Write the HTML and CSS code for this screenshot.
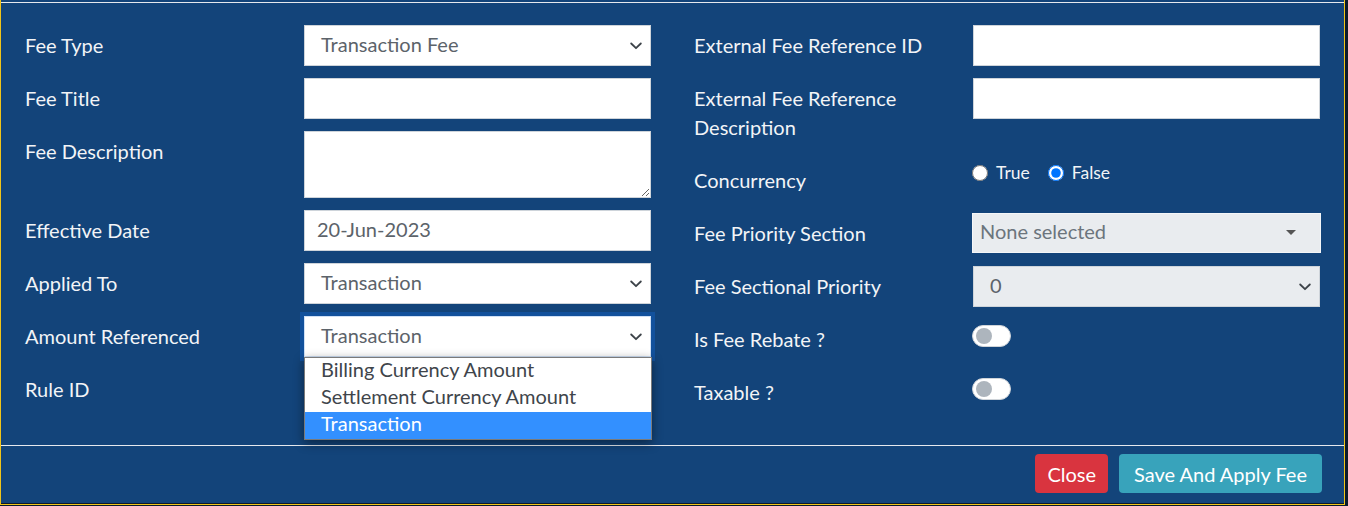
FILE: index.html
```html
<!DOCTYPE html>
<html lang="en">
<head>
<meta charset="utf-8">
<title>Fee</title>
<link rel="stylesheet" href="styles.css">
</head>
<body>
<div class="frame">
  <div class="modal">
    <div class="modal-top"></div>
    <div class="modal-body">
      <div class="col">
        <div class="group">
          <div class="label">Fee Type</div>
          <div class="control">
            <div class="field select"><span>Transaction Fee</span>
              <svg class="chev" viewBox="0 0 12 8" width="12" height="8"><polyline points="1.2,1.5 6,6.2 10.8,1.5" fill="none" stroke="#3d4349" stroke-width="1.8" stroke-linecap="round" stroke-linejoin="round"/></svg>
            </div>
          </div>
        </div>
        <div class="group">
          <div class="label">Fee Title</div>
          <div class="control"><input class="field" type="text" value=""></div>
        </div>
        <div class="group">
          <div class="label">Fee Description</div>
          <div class="control"><textarea class="field area"></textarea></div>
        </div>
        <div class="group">
          <div class="label">Effective Date</div>
          <div class="control"><input class="field" type="text" value="20-Jun-2023"></div>
        </div>
        <div class="group">
          <div class="label">Applied To</div>
          <div class="control">
            <div class="field select"><span>Transaction</span>
              <svg class="chev" viewBox="0 0 12 8" width="12" height="8"><polyline points="1.2,1.5 6,6.2 10.8,1.5" fill="none" stroke="#3d4349" stroke-width="1.8" stroke-linecap="round" stroke-linejoin="round"/></svg>
            </div>
          </div>
        </div>
        <div class="group">
          <div class="label">Amount Referenced</div>
          <div class="control anchor">
            <div class="field select focus"><span>Transaction</span>
              <svg class="chev" viewBox="0 0 12 8" width="12" height="8"><polyline points="1.2,1.5 6,6.2 10.8,1.5" fill="none" stroke="#3d4349" stroke-width="1.8" stroke-linecap="round" stroke-linejoin="round"/></svg>
            </div>
            <ul class="options">
              <li>Billing Currency Amount</li>
              <li>Settlement Currency Amount</li>
              <li class="sel">Transaction</li>
            </ul>
          </div>
        </div>
        <div class="group">
          <div class="label">Rule ID</div>
          <div class="control">
            <div class="field select"><span></span></div>
          </div>
        </div>
      </div>

      <div class="col">
        <div class="group">
          <div class="label">External Fee Reference ID</div>
          <div class="control"><input class="field" type="text" value=""></div>
        </div>
        <div class="group">
          <div class="label">External Fee Reference Description</div>
          <div class="control"><input class="field" type="text" value=""></div>
        </div>
        <div class="group">
          <div class="label">Concurrency</div>
          <div class="control radios">
            <label class="radio"><input type="radio" name="conc"> True</label>
            <label class="radio"><input type="radio" name="conc" checked> False</label>
          </div>
        </div>
        <div class="group">
          <div class="label">Fee Priority Section</div>
          <div class="control">
            <div class="multi"><span>None selected</span><span class="caret"></span></div>
          </div>
        </div>
        <div class="group">
          <div class="label">Fee Sectional Priority</div>
          <div class="control">
            <div class="field select grey"><span>0</span>
              <svg class="chev" viewBox="0 0 12 8" width="12" height="8"><polyline points="1.2,1.5 6,6.2 10.8,1.5" fill="none" stroke="#3d4349" stroke-width="1.8" stroke-linecap="round" stroke-linejoin="round"/></svg>
            </div>
          </div>
        </div>
        <div class="group">
          <div class="label">Is Fee Rebate ?</div>
          <div class="control"><span class="switch"><span class="knob"></span></span></div>
        </div>
        <div class="group">
          <div class="label">Taxable ?</div>
          <div class="control"><span class="switch"><span class="knob"></span></span></div>
        </div>
      </div>
    </div>
    <div class="modal-footer">
      <button class="btn btn-close">Close</button>
      <button class="btn btn-save">Save And Apply Fee</button>
    </div>
  </div>
</div>
</body>
</html>
```

FILE: styles.css
```css
html, body {
  margin: 0;
  padding: 0;
}
body {
  background: #0b1a2c;
  font-family: Lato, "Noto Sans", sans-serif;
  width: 1348px;
  height: 506px;
  overflow: hidden;
}
.frame {
  width: 1343px;
  border-left: 1px solid #f0c419;
  border-right: 1px solid #f0c419;
  border-bottom: 1px solid #f0c419;
  padding-bottom: 1px;
}
.modal {
  background: #13447a;
  height: 503px;
  display: flex;
  flex-direction: column;
}
.modal-top {
  height: 2px;
  border-bottom: 1px solid #e6e9ee;
}
.modal-body {
  height: 443px;
  box-sizing: border-box;
  padding: 22px 23px 0 24px;
  display: flex;
  gap: 43px;
  border-bottom: 1px solid #e6e9ee;
}
.col {
  width: 626px;
  flex: none;
}
.group {
  display: flex;
  margin-bottom: 12px;
}
.label {
  width: 279px;
  flex: none;
  box-sizing: border-box;
  padding: 6px 15px 6px 0;
  line-height: 29px;
  font-size: 20px;
  color: #f2f4f7;
}
.control {
  width: 347px;
  flex: none;
}
.anchor {
  position: relative;
}
.field {
  display: block;
  width: 347px;
  height: 41px;
  box-sizing: border-box;
  margin: 0;
  background: #fff;
  border: 1px solid #ced4da;
  border-radius: 0;
  font-family: inherit;
  font-size: 20px;
  color: #5c636a;
  padding: 0 12px 3px;
  outline: none;
}
.area {
  height: 67px;
  resize: vertical;
  padding: 6px 12px;
}
.select {
  display: flex;
  align-items: center;
  justify-content: space-between;
  padding: 0 8px 3px 16px;
}
.chev {
  flex: none;
  margin-top: 3px;
}
.select.focus {
  border-color: #cfe0f5;
  box-shadow: 0 0 0 4px rgba(20, 110, 230, 0.32);
}
.select.grey {
  background: #e9ecef;
  padding-left: 16px;
}
.options {
  position: absolute;
  top: 41px;
  left: 0;
  width: 348px;
  box-sizing: border-box;
  margin: 0;
  padding: 0;
  list-style: none;
  background: #fff;
  border: 1px solid #7a7a7a;
  box-shadow: 0 3px 10px rgba(0, 0, 0, 0.45);
  z-index: 5;
}
.options li {
  height: 27px;
  line-height: 23px;
  padding-left: 16px;
  font-size: 20px;
  color: #3f454b;
}
.options li.sel {
  background: #3390ff;
  color: #fff;
}
.radios {
  display: flex;
  align-items: center;
  height: 25px;
  margin-left: -1px;
}
.radio {
  display: flex;
  align-items: center;
  font-size: 17.5px;
  color: #f2f4f7;
  margin-right: 18px;
}
.radio input {
  width: 16px;
  height: 16px;
  margin: 0 8px 0 0;
}
.multi {
  height: 40px;
  margin: 0 -1px;
  box-sizing: border-box;
  background: #e9ecef;
  border: 1px solid #f4f6f8;
  display: flex;
  align-items: center;
  justify-content: space-between;
  padding: 0 24px 5px 7px;
  font-size: 20px;
  color: #6c757d;
}
.caret {
  width: 0;
  height: 0;
  margin-top: 4px;
  border-left: 5px solid transparent;
  border-right: 5px solid transparent;
  border-top: 5px solid #555;
}
.switch {
  display: block;
  width: 39px;
  height: 22px;
  box-sizing: border-box;
  margin: 6px 0 0 -1px;
  background: #fff;
  border: 1px solid #cfd4d9;
  border-radius: 11px;
  position: relative;
}
.knob {
  position: absolute;
  left: 3px;
  top: 2px;
  width: 16px;
  height: 16px;
  border-radius: 50%;
  background: #adb5bd;
}
.modal-footer {
  flex: 1;
  display: flex;
  justify-content: flex-end;
  align-items: flex-start;
  gap: 11px;
  padding: 8px 22px 0 0;
}
.btn {
  height: 39px;
  border: 0;
  border-radius: 4px;
  font-family: inherit;
  font-size: 20px;
  color: #fff;
}
.btn-close {
  padding: 0 12px;
  background: #d9343f;
}
.btn-save {
  padding: 0 15px;
  background: #38a3bb;
}
```
